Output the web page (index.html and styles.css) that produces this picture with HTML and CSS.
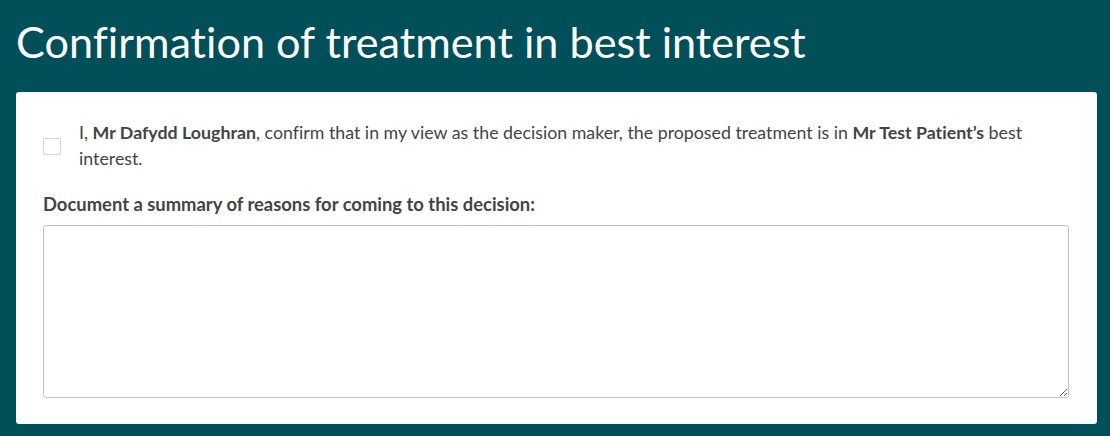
FILE: index.html
```html
<!DOCTYPE html>
<html>
<head>
<meta charset="utf-8">
<link rel="stylesheet" href="styles.css">
</head>
<body>
<div class="page">
  <h1 class="title">Confirmation of treatment in best interest</h1>
  <div class="card">
    <label class="confirm">
      <span class="box"></span>
      <span class="confirm-text">I, <b>Mr Dafydd Loughran</b>, confirm that in my view as the decision maker, the proposed treatment is in <b>Mr Test Patient’s</b> best interest.</span>
    </label>
    <div class="field-label">Document a summary of reasons for coming to this decision:</div>
    <textarea class="reasons"></textarea>
  </div>
</div>
</body>
</html>
```

FILE: styles.css
```css
html, body {
  margin: 0;
  padding: 0;
  background: #004f59;
}
.page {
  width: 1110px;
  height: 436px;
  box-sizing: border-box;
  padding: 0 13px 12px 16px;
  font-family: Lato, "Open Sans", sans-serif;
  font-variant-ligatures: none;
}
.title {
  margin: 0;
  padding: 14px 0 0 0;
  height: 92px;
  box-sizing: border-box;
  font-size: 43.2px;
  font-weight: 400;
  line-height: 54px;
  color: #ffffff;
}
.card {
  background: #ffffff;
  border-radius: 3px;
  height: 332px;
  box-sizing: border-box;
  padding: 27px 27px 0 27px;
  color: #444444;
}
.confirm {
  display: flex;
  align-items: center;
  gap: 18px;
}
.box {
  flex: none;
  width: 16px;
  height: 15px;
  border: 1px solid #d6d6d6;
  border-radius: 1px;
  margin-top: 2px;
}
.confirm-text {
  font-size: 17.8px;
  line-height: 26px;
}
.confirm-text b {
  font-weight: 700;
}
.field-label {
  margin-top: 20px;
  font-size: 18.4px;
  line-height: 26px;
  font-weight: 700;
}
.reasons {
  display: block;
  margin-top: 8px;
  width: 1026px;
  height: 173px;
  box-sizing: border-box;
  border: 1px solid #c4c4c4;
  border-radius: 3px;
  background: #fff;
  font-family: Lato, sans-serif;
  font-size: 16px;
  padding: 6px 10px;
}
```
